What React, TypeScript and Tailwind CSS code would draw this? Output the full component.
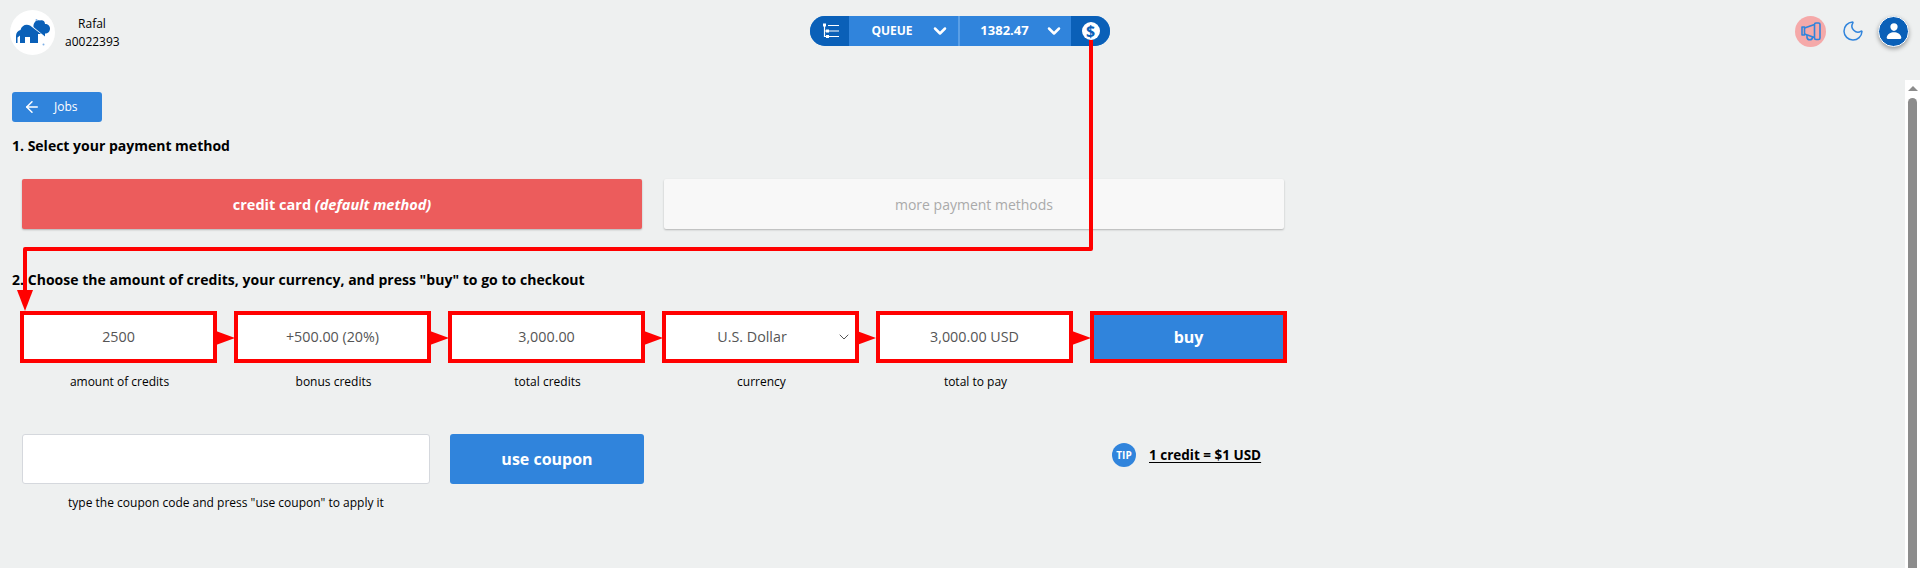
import React from "react";
import { ArrowLeft, ChevronDown, Moon } from "lucide-react";
import { IoPerson } from "react-icons/io5";

const Logo = () => (
  <svg viewBox="0 0 45 45" className="w-[45px] h-[45px]">
    <circle cx="22.500" cy="22.500" r="22.500" fill="#fff" />
    <path
      d="M6 33V26C6 22.500 8 20.500 10.500 20C11.500 15.500 16 13.500 20 15.500L31 24H28V33H20V27H15V33H10V25.500L7.500 27.500V33Z"
      fill="#0a60b8"
    />
    <path
      d="M24 13.500C25 10.500 28 9.500 30 10.500C33 9.500 35 11.500 35 14C38 14 40 16 40 18.500C40 21.500 38 23.500 35 23.500V26.500L24 17.500C23 16.500 23.500 15 24 13.500Z"
      fill="#0a60b8"
    />
    <circle cx="26.500" cy="10" r="1" fill="#7fb0e6" />
    <circle cx="33.500" cy="34.500" r="1" fill="#7fb0e6" />
  </svg>
);

const QueueIcon = () => (
  <svg width="18" height="16" viewBox="0 0 18 16" fill="none" stroke="#fff" strokeWidth="1.200">
    <path d="M2.500 2V13.500H5M2.500 8H5" />
    <path d="M6 2.500H17M7 8H17M7 13.500H17" />
    <rect x="1" y="0.500" width="3" height="3" fill="#fff" stroke="none" />
    <rect x="4" y="6.500" width="3" height="3" fill="#fff" stroke="none" />
    <rect x="4" y="12" width="3" height="3" fill="#fff" stroke="none" />
  </svg>
);

const HornIcon = () => (
  <svg width="20" height="19" viewBox="0 0 20 19" fill="none" stroke="#3084dc" strokeWidth="1.600" strokeLinejoin="round">
    <rect x="1" y="5" width="2.500" height="8" />
    <path d="M3.500 6L13.500 2.500M3.500 12L13.500 15.500" />
    <rect x="13.500" y="1" width="5.500" height="16.500" rx="1.500" />
    <path d="M6 13V15.500A2.800 2.800 0 0 0 11.500 15.500V14.500" />
  </svg>
);

const Field = ({
  label,
  children,
  className,
}: {
  label: string;
  children: React.ReactNode;
  className?: string;
}) => (
  <div className="w-[197px] flex flex-col items-center">
    <div
      className={
        "w-full h-[52px] flex items-center justify-center border-[4px] border-[#ff0000] " +
        (className ?? "bg-white text-[14.3px] text-[#555]")
      }
    >
      {children}
    </div>
    <span className="mt-[10px] pl-[2px] h-[18px] text-[12px] leading-[18px] text-black">{label}</span>
  </div>
);

// the tutorial arrows painted over the page
const Annotations = () => (
  <svg className="absolute left-0 top-0 pointer-events-none" width="1920" height="568">
    <path
      d="M1091 40V249H25V292"
      fill="none"
      stroke="#ff0000"
      strokeWidth="4"
      strokeLinejoin="round"
    />
    <polygon points="17,290 33,290 25,311" fill="#ff0000" />
    <polygon points="216,331 235,338 216,345" fill="#ff0000" />
    <polygon points="430,331 449,338 430,345" fill="#ff0000" />
    <polygon points="644,331 663,338 644,345" fill="#ff0000" />
    <polygon points="857,331 876,338 857,345" fill="#ff0000" />
    <polygon points="1072,331 1091,338 1072,345" fill="#ff0000" />
  </svg>
);

export default function App() {
  return (
    <div className="relative h-screen overflow-hidden bg-[#eef0f0] font-['Open_Sans',sans-serif] text-black">
      <header className="h-[62px] grid grid-cols-3 items-center pr-[11px] pl-[10px]">
        <div className="flex items-center gap-[10px] pt-[3px]">
          <Logo />
          <div className="w-[54px] text-center text-[12px] leading-[18px]">
            <div>Rafal</div>
            <div>a0022393</div>
          </div>
        </div>

        <div className="justify-self-center ml-[1px] flex h-[30px] w-[300px] rounded-full overflow-hidden bg-[#3084dc] text-white text-[12px] font-bold">
          <div className="w-[39px] bg-[#0a60b8] flex items-center justify-center pl-[2px]">
            <QueueIcon />
          </div>
          <div className="w-[111px] flex items-center justify-center gap-[17px] pl-[14px] border-r-2 border-[#5a9fe6]">
            <span>QUEUE</span>
            <ChevronDown size={20} strokeWidth={3} />
          </div>
          <div className="flex-1 flex items-center justify-center gap-[15px] pl-[13px]">
            <span className="text-[13px]">1382.47</span>
            <ChevronDown size={20} strokeWidth={3} />
          </div>
          <div className="w-[39px] bg-[#0a60b8] flex items-center justify-center">
            <span className="w-[18px] h-[18px] rounded-full bg-white text-[#0a60b8] text-[16px] leading-[18px] text-center font-bold">
              $
            </span>
          </div>
        </div>

        <div className="justify-self-end flex items-center">
          <div className="w-[31px] h-[31px] rounded-full bg-[#f5a9a9] flex items-center justify-center">
            <HornIcon />
          </div>
          <Moon size={24} strokeWidth={1.5} className="ml-[15px] text-[#3084dc]" />
          <div className="ml-[13px] w-[31px] h-[31px] rounded-full bg-[#0a60b8] border border-white shadow-[0_2px_4px_rgba(0,0,0,0.35)] flex items-center justify-center text-white">
            <IoPerson size={18} />
          </div>
        </div>
      </header>

      <main className="pl-[12px] pt-[30px]">
        <button className="w-[90px] h-[30px] rounded-[3px] bg-[#3084dc] text-white flex items-center pl-[11px] gap-[13px] text-[12px]">
          <ArrowLeft size={18} strokeWidth={2} />
          <span>Jobs</span>
        </button>

        <h2 className="mt-[14px] text-[14px] leading-[20px] font-bold">1. Select your payment method</h2>

        <div className="mt-[23px] ml-[10px] flex gap-[22px]">
          <div className="w-[620px] h-[50px] pt-[1px] rounded-[2px] bg-[#ec5c5c] shadow-[0_1px_2px_rgba(0,0,0,0.25)] flex items-center justify-center text-white text-[14.5px] font-bold">
            credit card&nbsp;<em>(default method)</em>
          </div>
          <div className="w-[620px] h-[50px] rounded-[2px] bg-[#f8f8f8] shadow-[0_1px_2px_rgba(0,0,0,0.25)] flex items-center justify-center text-[#aaa] text-[14px]">
            more payment methods
          </div>
        </div>

        <h2 className="mt-[41px] text-[14px] leading-[20px] font-bold tracking-[0.03px]">
          2. Choose the amount of credits, your currency, and press "buy" to go to checkout
        </h2>

        <div className="mt-[21px] ml-[8px] flex gap-[17px]">
          <Field label="amount of credits">2500</Field>
          <Field label="bonus credits">+500.00 (20%)</Field>
          <Field label="total credits">3,000.00</Field>
          <Field label="currency">
            <div className="relative w-full text-center pr-[17px]">
              U.S. Dollar
              <ChevronDown size={16} strokeWidth={1.5} className="absolute right-[3px] top-[3px] text-[#555]" />
            </div>
          </Field>
          <Field label="total to pay">3,000.00 USD</Field>
          <Field label="" className="bg-[#3084dc] text-white text-[16px] font-bold">
            buy
          </Field>
        </div>

        <div className="mt-[43px] ml-[10px] flex items-start">
          <div className="w-[408px] flex flex-col items-center">
            <input className="w-full h-[50px] rounded-[3px] bg-white border border-[#d5d8dd]" />
            <span className="mt-[10px] text-[12px] leading-[18px]">
              type the coupon code and press "use coupon" to apply it
            </span>
          </div>
          <button className="ml-[20px] w-[194px] h-[50px] rounded-[3px] bg-[#3084dc] text-white text-[16px] font-bold">
            use coupon
          </button>
          <div className="ml-[468px] mt-[9px] flex items-center gap-[13px]">
            <span className="w-[24px] h-[24px] rounded-full bg-[#3084dc] text-white text-[10px] leading-[24px] text-center font-bold">
              TIP
            </span>
            <span className="text-[13.5px] font-bold underline underline-offset-2">1 credit = $1 USD</span>
          </div>
        </div>
      </main>

      <div className="absolute right-0 top-[80px] bottom-0 w-[15px] bg-white flex flex-col items-center">
        <div className="mt-[6px] w-0 h-0 border-x-[5px] border-x-transparent border-b-[5px] border-b-[#8c8c8c]" />
        <div className="mt-[7px] flex-1 w-[9px] rounded-t-full bg-[#8c8c8c]" />
      </div>

      <Annotations />
    </div>
  );
}
